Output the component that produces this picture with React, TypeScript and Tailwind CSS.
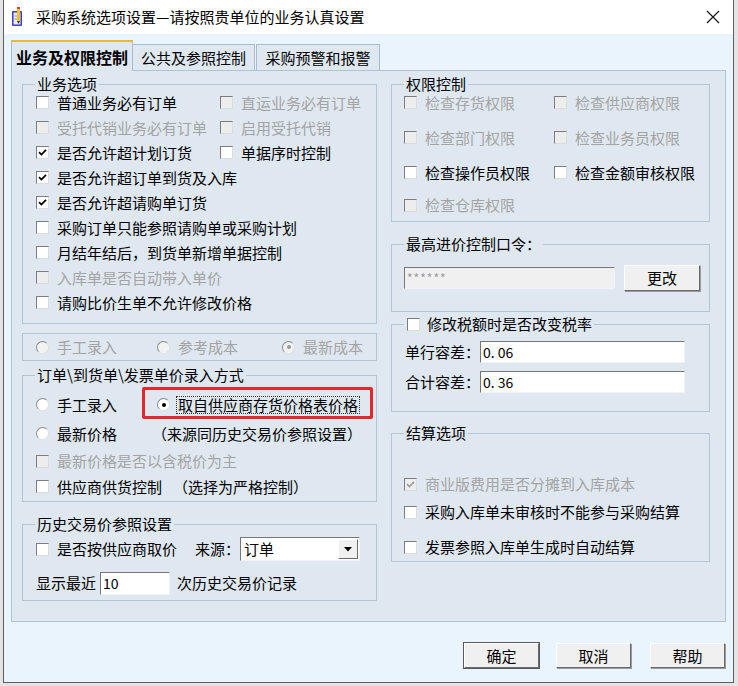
import React from "react";

const DIS = "text-[#a4a4a4]";

function CheckBox({ checked = false, disabled = false }: { checked?: boolean; disabled?: boolean }) {
  return (
    <span
      className={`relative inline-block w-[13px] h-[13px] shrink-0 border border-t-[#7d7d7d] border-l-[#7d7d7d] border-r-[#dcdcdc] border-b-[#dcdcdc] ${
        disabled ? "bg-[#ededed]" : "bg-white"
      }`}
    >
      {checked && (
        <svg className="absolute left-[1px] top-[1px]" width="9" height="9" viewBox="0 0 9 9">
          <path d="M1 4.2 L3.4 6.6 L8 1.8" stroke={disabled ? "#a0a0a0" : "#000"} strokeWidth="1.7" fill="none" />
        </svg>
      )}
    </span>
  );
}

function Check({
  label,
  checked = false,
  disabled = false,
  className = "",
}: {
  label: string;
  checked?: boolean;
  disabled?: boolean;
  className?: string;
}) {
  return (
    <div className={`flex items-center gap-[8px] ${className}`}>
      <CheckBox checked={checked} disabled={disabled} />
      <span className={disabled ? DIS : "text-black"}>{label}</span>
    </div>
  );
}

function RadioDot({ checked = false, disabled = false }: { checked?: boolean; disabled?: boolean }) {
  return (
    <span
      className={`relative inline-flex items-center justify-center w-[13px] h-[13px] shrink-0 rounded-full border border-t-[#8a8a8a] border-l-[#8a8a8a] border-r-[#e0e0e0] border-b-[#e0e0e0] ${
        disabled ? "bg-[#f2f2f2]" : "bg-white"
      }`}
    >
      {checked && <span className={`w-[4px] h-[4px] rounded-full ${disabled ? "bg-[#9a9a9a]" : "bg-black"}`} />}
    </span>
  );
}

function Radio({
  label,
  checked = false,
  disabled = false,
  className = "",
}: {
  label: React.ReactNode;
  checked?: boolean;
  disabled?: boolean;
  className?: string;
}) {
  return (
    <div className={`flex items-center gap-[8px] ${className}`}>
      <RadioDot checked={checked} disabled={disabled} />
      <span className={disabled ? DIS : "text-black"}>{label}</span>
    </div>
  );
}

function Group({
  legend,
  className = "",
  legendLeft = "left-[12px]",
  children,
}: {
  legend?: React.ReactNode;
  className?: string;
  legendLeft?: string;
  children?: React.ReactNode;
}) {
  return (
    <div className={`relative border border-[#b3c5d9] ${className}`}>
      {legend && (
        <div className={`absolute top-[-10px] ${legendLeft} px-[2px] bg-[#dfe8f1] leading-[18px] flex items-center`}>
          {legend}
        </div>
      )}
      {children}
    </div>
  );
}

function SunkenInput({ value, className = "", disabled = false }: { value: string; className?: string; disabled?: boolean }) {
  return (
    <div
      className={`flex items-center px-[2px] border border-t-[#777] border-l-[#777] border-r-[#f2f2f2] border-b-[#f2f2f2] ${
        disabled ? "bg-[#f0f0f0] text-[#9a9a9a]" : "bg-white text-black"
      } ${className}`}
    >
      {value}
    </div>
  );
}

function Btn({ label, def = false, className = "" }: { label: string; def?: boolean; className?: string }) {
  return (
    <div
      className={`flex items-center justify-center bg-[#f0f0f0] border border-t-[#fdfdfd] border-l-[#fdfdfd] border-r-[#6b6b6b] border-b-[#6b6b6b] shadow-[1px_1px_0_#9a9a9a] ${
        def ? "outline outline-1 outline-[#5a5a5a]" : ""
      } ${className}`}
    >
      {label}
    </div>
  );
}

function TitleIcon() {
  return (
    <svg width="14" height="20" viewBox="0 0 14 20">
      <rect x="1" y="4" width="10" height="15" rx="1" fill="#3b3fb8" />
      <rect x="2.5" y="5.5" width="7" height="12" fill="#e9e9f7" />
      <line x1="3.5" y1="9" x2="8.5" y2="9" stroke="#9a9ad0" strokeWidth="1" />
      <line x1="3.5" y1="12" x2="8.5" y2="12" stroke="#9a9ad0" strokeWidth="1" />
      <rect x="6" y="1" width="3" height="13" fill="#f2c230" />
      <rect x="6" y="0" width="3" height="2" fill="#d8403a" />
      <path d="M6 14 L7.5 17 L9 14 Z" fill="#333" />
    </svg>
  );
}

export default function App() {
  return (
    <div className="w-[738px] h-[686px] bg-[#e4e4e4] overflow-hidden font-['Noto_Sans_CJK_SC','Microsoft_YaHei',sans-serif] text-[15px] leading-[18px] text-black">
      <div className="ml-[3px] w-[731px] h-[683px] border-l border-r border-b border-[#5e5e5e] flex flex-col">
        {/* Title bar */}
        <div className="h-[34px] bg-white flex items-center pl-[7px] pr-[12px]">
          <TitleIcon />
          <span className="ml-[11px] text-[15px] text-black">采购系统选项设置—请按照贵单位的业务认真设置</span>
          <div className="flex-1" />
          <svg width="14" height="14" viewBox="0 0 14 14" className="mr-[1px]">
            <path d="M1 1 L13 13 M13 1 L1 13" stroke="#111" strokeWidth="1.1" />
          </svg>
        </div>

        {/* Body */}
        <div className="flex-1 bg-[#eaf4fd] pt-[6px] pl-[7px] pr-[7px] flex flex-col">
          {/* Tabs */}
          <div className="flex items-end h-[30px]">
            <div className="relative z-10 w-[122px] h-[31px] -mb-[1px] bg-[#dfe8f1] border-l border-r border-[#a9bccf] border-t-2 border-t-[#e6b93a] flex items-center justify-center text-[16px] font-bold">
              业务及权限控制
            </div>
            <div className="w-[122px] h-[26px] bg-[#dfe8f1] border-t border-r border-[#a9bccf] flex items-center justify-center">
              公共及参照控制
            </div>
            <div className="ml-[1px] w-[124px] h-[26px] bg-[#dfe8f1] border-t border-l border-r border-[#a9bccf] flex items-center justify-center">
              采购预警和报警
            </div>
          </div>

          {/* Panel */}
          <div className="w-[715px] h-[552px] border border-[#b0c2d5] bg-[#dfe8f1] pl-[10px] flex gap-[14px]">
            {/* Left column */}
            <div className="w-[355px] flex flex-col">
              <Group legend={<span>业务选项</span>} className="mt-[13px] h-[240px] pt-[5px] pl-[13px]">
                <div className="h-[25px] flex items-center">
                  <Check label="普通业务必有订单" className="w-[184px]" />
                  <Check label="直运业务必有订单" disabled />
                </div>
                <div className="h-[25px] flex items-center">
                  <Check label="受托代销业务必有订单" disabled className="w-[184px]" />
                  <Check label="启用受托代销" disabled />
                </div>
                <div className="h-[25px] flex items-center">
                  <Check label="是否允许超计划订货" checked className="w-[184px]" />
                  <Check label="单据序时控制" />
                </div>
                <div className="h-[25px] flex items-center">
                  <Check label="是否允许超订单到货及入库" checked />
                </div>
                <div className="h-[25px] flex items-center">
                  <Check label="是否允许超请购单订货" checked />
                </div>
                <div className="h-[25px] flex items-center">
                  <Check label="采购订单只能参照请购单或采购计划" />
                </div>
                <div className="h-[25px] flex items-center">
                  <Check label="月结年结后，到货单新增单据控制" />
                </div>
                <div className="h-[25px] flex items-center">
                  <Check label="入库单是否自动带入单价" disabled />
                </div>
                <div className="h-[25px] flex items-center">
                  <Check label="请购比价生单不允许修改价格" />
                </div>
              </Group>

              <Group className="mt-[9px] h-[28px] pl-[13px] flex items-center">
                <Radio label="手工录入" disabled className="w-[121px]" />
                <Radio label="参考成本" disabled className="w-[125px]" />
                <Radio label="最新成本" disabled checked />
              </Group>

              <Group legend={<span>订单\到货单\发票单价录入方式</span>} className="mt-[14px] h-[127px] pt-[14px] pl-[13px]">
                <div className="h-[29px] flex items-center">
                  <Radio label="手工录入" className="w-[121px]" />
                  <Radio
                    checked
                    label={<span className="border border-dotted border-[#333] px-[1px] leading-[16px] inline-block">取自供应商存货价格表价格</span>}
                    className="!gap-[6px]"
                  />
                </div>
                <div className="h-[29px] flex items-center">
                  <Radio label="最新价格" className="w-[116px]" />
                  <span>（来源同历史交易价参照设置）</span>
                </div>
                <div className="h-[26px] flex items-center">
                  <Check label="最新价格是否以含税价为主" disabled />
                </div>
                <div className="h-[25px] flex items-center">
                  <Check label="供应商供货控制" />
                  <span className="ml-[11px]">（选择为严格控制）</span>
                </div>
                {/* red annotation box */}
                <div className="absolute left-[119px] top-[11px] w-[231px] h-[32px] border-[3px] border-[#e5262b] rounded-[2px] pointer-events-none" />
              </Group>

              <Group legend={<span>历史交易价参照设置</span>} className="mt-[22px] h-[77px] pl-[13px]">
                <div className="mt-[11px] h-[26px] flex items-center">
                  <Check label="是否按供应商取价" className="w-[159px]" />
                  <span className="w-[45px]">来源：</span>
                  <div className="w-[120px] h-[24px] flex items-center border border-t-[#777] border-l-[#777] border-r-[#f2f2f2] border-b-[#f2f2f2] bg-white">
                    <span className="pl-[3px] flex-1">订单</span>
                    <div className="w-[20px] h-[20px] mr-[1px] bg-[#f0f0f0] border border-t-white border-l-white border-r-[#6b6b6b] border-b-[#6b6b6b] flex items-center justify-center">
                      <svg width="8" height="5" viewBox="0 0 8 5">
                        <path d="M0 0 L8 0 L4 4.5 Z" fill="#000" />
                      </svg>
                    </div>
                  </div>
                </div>
                <div className="mt-[8px] h-[26px] flex items-center">
                  <span className="w-[64px]">显示最近</span>
                  <SunkenInput value="10" className="w-[70px] h-[23px] text-[14px]" />
                  <span className="ml-[7px]">次历史交易价记录</span>
                </div>
              </Group>
            </div>

            {/* Right column */}
            <div className="w-[319px] flex flex-col">
              <Group legend={<span>权限控制</span>} className="mt-[13px] h-[138px] pl-[12px]">
                <div className="h-[35px] flex items-center">
                  <Check label="检查存货权限" disabled className="w-[150px]" />
                  <Check label="检查供应商权限" disabled />
                </div>
                <div className="h-[35px] flex items-center">
                  <Check label="检查部门权限" disabled className="w-[150px]" />
                  <Check label="检查业务员权限" disabled />
                </div>
                <div className="h-[35px] flex items-center">
                  <Check label="检查操作员权限" className="w-[150px]" />
                  <Check label="检查金额审核权限" />
                </div>
                <div className="h-[30px] flex items-center">
                  <Check label="检查仓库权限" disabled />
                </div>
              </Group>

              <Group legend={<span>最高进价控制口令：</span>} className="mt-[22px] h-[68px] pl-[12px] pt-[20px]">
                <div className="h-[26px] flex items-center">
                  <SunkenInput value="******" disabled className="w-[211px] h-[22px] text-[12px] tracking-[1px]" />
                  <Btn label="更改" className="ml-[9px] w-[76px] h-[26px]" />
                </div>
              </Group>

              <Group
                legend={
                  <div className="flex items-center gap-[7px] pl-[1px]">
                    <CheckBox />
                    <span>修改税额时是否改变税率</span>
                  </div>
                }
                className="mt-[12px] h-[88px] pl-[13px] pt-[16px]"
              >
                <div className="h-[22px] flex items-center">
                  <span className="w-[75px]">单行容差：</span>
                  <SunkenInput value="0. 06" className="w-[205px] h-[22px] text-[14px]" />
                </div>
                <div className="mt-[8px] h-[22px] flex items-center">
                  <span className="w-[75px]">合计容差：</span>
                  <SunkenInput value="0. 36" className="w-[205px] h-[22px] text-[14px]" />
                </div>
              </Group>

              <Group legend={<span>结算选项</span>} className="mt-[21px] h-[129px] pl-[12px] pt-[36px]">
                <div className="h-[28px] flex items-center">
                  <Check label="商业版费用是否分摊到入库成本" checked disabled />
                </div>
                <div className="h-[28px] flex items-center">
                  <Check label="采购入库单未审核时不能参与采购结算" />
                </div>
                <div className="mt-[8px] h-[26px] flex items-center">
                  <Check label="发票参照入库单生成时自动结算" />
                </div>
              </Group>
            </div>
          </div>

          {/* Buttons */}
          <div className="mt-[21px] flex justify-end pr-[1px]">
            <Btn label="确定" def className="w-[75px] h-[25px]" />
            <Btn label="取消" className="ml-[17px] w-[75px] h-[25px]" />
            <Btn label="帮助" className="ml-[19px] w-[75px] h-[25px]" />
          </div>
        </div>
      </div>
    </div>
  );
}
